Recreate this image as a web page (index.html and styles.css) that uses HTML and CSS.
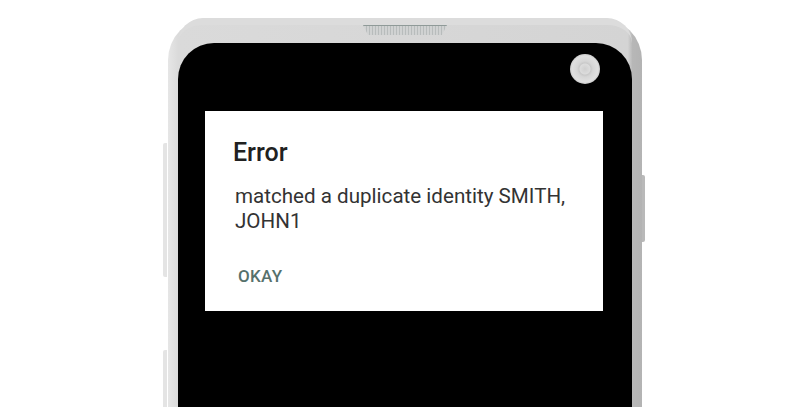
FILE: index.html
```html
<!DOCTYPE html>
<html>
<head>
<meta charset="utf-8">
<link rel="stylesheet" href="styles.css">
</head>
<body>
<div class="stage">
  <div class="phone">
    <span class="btn btn-l1"></span>
    <span class="btn btn-l2"></span>
    <span class="btn btn-r1"></span>
    <div class="bezel">
      <div class="speaker"></div>
    </div>
    <div class="screen">
      <span class="camera"></span>
      <div class="dialog">
        <div class="title">Error</div>
        <div class="message">matched a duplicate identity SMITH, JOHN1</div>
        <div class="actions"><span class="okay">OKAY</span></div>
      </div>
    </div>
  </div>
</div>
</body>
</html>
```
FILE: styles.css
```css
html, body {
  margin: 0;
  padding: 0;
  background: #ffffff;
  overflow: hidden;
}
.stage {
  width: 800px;
  height: 407px;
  overflow: hidden;
  padding-top: 18px;
  box-sizing: border-box;
}
.phone {
  position: relative;
  margin-left: 168px;
  width: 474px;
  height: 460px;
  border-radius: 42px 42px 0 0;
  background: linear-gradient(to right, #e6e6e6 0, #dadada 2.2%, #d7d7d7 50%, #d4d4d4 97%, #b7b7b7 98%, #b3b3b3 100%);
  padding: 0 10px;
  box-sizing: border-box;
}
.bezel {
  height: 25px;
  display: flex;
  justify-content: center;
  border-top: 7px solid #dcdcdc;
  border-radius: 42px 42px 0 0;
  box-sizing: border-box;
}
.speaker {
  width: 84px;
  height: 10px;
  background: repeating-linear-gradient(to right, #b8bcbc 0, #b8bcbc 1px, #d0d2d2 1px, #d0d2d2 3px);
  clip-path: polygon(0 0, 100% 0, 94% 100%, 6% 100%);
  border-top: 1px solid #8f9a98;
  box-sizing: border-box;
}
.screen {
  position: relative;
  background: #000;
  height: 420px;
  border-radius: 36px 36px 0 0;
  padding-top: 68px;
  padding-left: 27px;
  box-sizing: border-box;
}
.camera {
  position: absolute;
  left: 392px;
  top: 11px;
  width: 30px;
  height: 30px;
  border-radius: 50%;
  background: radial-gradient(circle at 50% 50%, #cfcfcf 0, #dcdcdc 5px, #c9c9c9 6px, #d6d6d6 8px, #e0e0e0 13px, #cacaca 15px);
}
.btn {
  position: absolute;
  width: 4px;
  background: #e4e4e4;
}
.btn-l1 {
  left: -5px;
  top: 125px;
  height: 134px;
  border-radius: 2px 0 0 2px;
}
.btn-l2 {
  left: -5px;
  top: 332px;
  height: 130px;
  border-radius: 2px 0 0 2px;
}
.btn-r1 {
  right: -3px;
  top: 157px;
  width: 3px;
  height: 67px;
  background: #b9b9b9;
  border-radius: 0 2px 2px 0;
}
.dialog {
  width: 398px;
  height: 200px;
  background: #ffffff;
  box-sizing: border-box;
  padding: 26px 20px 0 28px;
  font-family: Roboto, "Liberation Sans", sans-serif;
}
.title {
  font-size: 25px;
  font-weight: 500;
  color: #212121;
  line-height: 32px;
}
.message {
  margin-top: 15px;
  margin-left: 2px;
  font-size: 20.6px;
  line-height: 25px;
  color: #333333;
}
.actions {
  margin-top: 32px;
  margin-left: 5px;
}
.okay {
  font-size: 17px;
  font-weight: 500;
  color: #56716c;
  letter-spacing: 0.3px;
}
```
